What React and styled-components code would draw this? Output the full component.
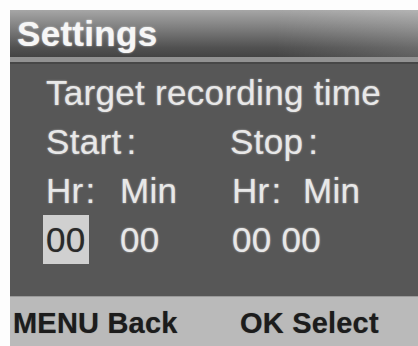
import React from 'react'
import styled, { createGlobalStyle } from 'styled-components'

const GlobalStyle = createGlobalStyle`
  html, body {
    margin: 0;
    padding: 0;
    background: #fdfdfd;
  }
  body {
    font-family: "Liberation Sans", Arial, sans-serif;
  }
`;

const Frame = styled.div`
  width: 418px;
  height: 346px;
  padding: 10px 0 0 10px;
  box-sizing: border-box;
  overflow: hidden;
`;

const Screen = styled.div`
  display: flex;
  flex-direction: column;
  height: 336px;
  background: #575757;
`;

const TitleBar = styled.div`
  height: 47px;
  display: flex;
  align-items: center;
  padding-left: 7px;
  background:
    linear-gradient(to right, rgba(255,255,255,0) 65%, rgba(255,255,255,0.15) 100%),
    linear-gradient(to bottom, #a6a6a6 0%, #7c7c7c 40%, #515151 80%, #444444 100%);
  color: #f6f6f6;
  font-size: 35px;
  font-weight: bold;
  letter-spacing: 0.3px;
  text-shadow: 0 0 2px rgba(255,255,255,0.7);
`;

const Divider = styled.div`
  height: 5px;
  background: #929292;
  border-bottom: 2px solid #474747;
`;

const Body = styled.div`
  flex: 1;
  padding: 4px 0 0 36px;
  display: grid;
  grid-template-columns: 74px 110px 73px 1fr;
  grid-auto-rows: 49px;
  align-content: start;
  align-items: center;
  color: #e8e8e8;
  font-size: 35px;
  letter-spacing: 0.3px;
  line-height: 49px;
  text-shadow: 0 0 2px rgba(255,255,255,0.6);
`;

const Cell = styled.div`
  grid-column: ${p => p.$span || 'auto'};
  white-space: nowrap;
  padding-left: ${p => p.$indent || 0}px;
`;

const Colon = styled.span`
  margin-left: ${p => p.$gap}px;
`;

const Selected = styled.span`
  display: inline-block;
  margin-left: -3px;
  padding: 0 3px 0 3px;
  background: #d0d0d0;
  color: #2a2a2a;
  text-shadow: 0 0 1px rgba(0,0,0,0.4);
`;

const Footer = styled.div`
  height: 50px;
  display: flex;
  align-items: center;
  padding: 4px 0 0 3px;
  box-sizing: border-box;
  background: #bababa;
  border-top: 1px solid #9a9a9a;
  color: #1c1c1c;
  font-size: 29px;
  font-weight: bold;
  letter-spacing: 0.2px;
  text-shadow: 0 0 1px rgba(0,0,0,0.45);
`;

const Hint = styled.span`
  width: ${p => p.$width}px;
  white-space: nowrap;
`;

export default function App() {
  return (
    <Frame>
      <GlobalStyle />
      <Screen>
        <TitleBar>Settings</TitleBar>
        <Divider />
        <Body>
          <Cell $span="1 / 5">Target recording time</Cell>
          <Cell $span="1 / 3">Start<Colon $gap={5}>:</Colon></Cell>
          <Cell $span="3 / 5">Stop<Colon $gap={5}>:</Colon></Cell>
          <Cell>Hr<Colon $gap={2}>:</Colon></Cell>
          <Cell>Min</Cell>
          <Cell $indent={2}>Hr<Colon $gap={2}>:</Colon></Cell>
          <Cell>Min</Cell>
          <Cell><Selected>00</Selected></Cell>
          <Cell>00</Cell>
          <Cell $span="3 / 5" $indent={2}>00 00</Cell>
        </Body>
        <Footer>
          <Hint $width={227}>MENU Back</Hint>
          <Hint $width={150}>OK Select</Hint>
        </Footer>
      </Screen>
    </Frame>
  );
}
